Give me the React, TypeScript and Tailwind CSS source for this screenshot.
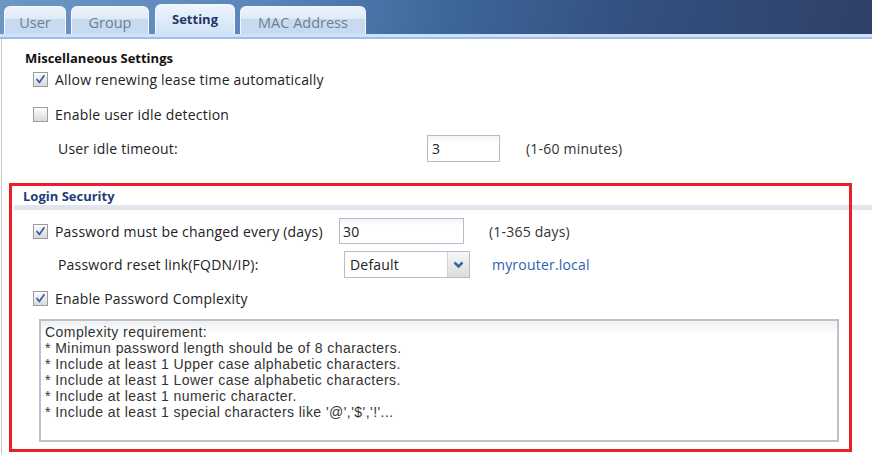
import React from "react";

const font = { fontFamily: '"Open Sans", "Liberation Sans", sans-serif' };
const areaFont = { fontFamily: '"Liberation Sans", Arial, sans-serif' };

function Check({ checked }: { checked: boolean }) {
  return (
    <div className="w-[15px] h-[15px] shrink-0 border border-[#9c9c9c] bg-gradient-to-b from-[#fdfdfd] to-[#d9d9d9] flex items-center justify-center">
      {checked && (
        <svg width="11" height="11" viewBox="0 0 11 11">
          <path d="M2 5.5 L4.3 8.5 L9 1.8" fill="none" stroke="#3d5fae" strokeWidth="1.8" strokeLinecap="round" strokeLinejoin="round" />
        </svg>
      )}
    </div>
  );
}

function Tab({ label, active, w }: { label: string; active?: boolean; w: string }) {
  return (
    <div
      className={`${w} ${active ? "h-[30px] bg-gradient-to-b from-[#eef5fd] to-[#cfe2f7] text-[#1f3766] font-bold pt-[5px] text-[13px]" : "h-[28px] bg-[linear-gradient(to_bottom,#edf3fb_0%,#dfeaf7_45%,#c7daf1_46%,#c7daf1_100%)] text-[#6f7f92] pt-[7px] text-[14.5px]"} rounded-t-[6px] border border-b-0 border-[#f4f8fe] flex items-start justify-center leading-[18px]`}
    >
      {label}
    </div>
  );
}

export default function App() {
  return (
    <div className="w-[872px] h-[454px] relative overflow-hidden bg-white text-[14px] tracking-[0.2px] text-[#222]" style={font}>
      <div className="h-[34px] bg-[linear-gradient(100deg,#6d95c5_0%,#5c86ba_30%,#3c6698_52%,#33507f_72%,#2f4068_100%)] flex items-end pl-[4px] tracking-normal">
        <Tab label="User" w="w-[62px]" />
        <div className="w-[5px]" />
        <Tab label="Group" w="w-[78px]" />
        <div className="w-[6px]" />
        <Tab label="Setting" active w="w-[80px]" />
        <div className="w-[5px]" />
        <Tab label="MAC Address" w="w-[126px]" />
      </div>
      <div className="h-[3px] bg-[#cfe2fb]" />
      <div className="h-[2px] bg-[#9fbfe6]" />
      <div className="ml-px border-l border-[#c6c6c6] h-[415px] flex flex-col">
        <div className="mt-[10px] h-[18px] leading-[18px] pl-[23px] font-bold text-[13px] tracking-normal text-[#111]">Miscellaneous Settings</div>
        <div className="h-[24px] flex items-center pl-[31px] gap-[7px]">
          <Check checked />
          <span>Allow renewing lease time automatically</span>
        </div>
        <div className="mt-[11px] h-[24px] flex items-center pl-[31px] gap-[7px]">
          <Check checked={false} />
          <span>Enable user idle detection</span>
        </div>
        <div className="mt-[9px] h-[27px] flex items-center pl-[56px]">
          <span className="w-[369px]">User idle timeout:</span>
          <div className="w-[73px] h-[27px] border border-[#b7bccb] bg-gradient-to-b from-[#f2f3f4] to-white to-[30%] flex items-center pl-[4px]">3</div>
          <span className="ml-[26px] text-[#333]">(1-60 minutes)</span>
        </div>
        <div className="mt-[25px] h-[18px] leading-[18px] pl-[21px] font-bold text-[13px] tracking-normal text-[#1e3e78]">Login Security</div>
        <div className="h-[5px] ml-[12px] bg-[#e1e5ee]" />
        <div className="mt-[8px] h-[26px] flex items-center pl-[31px]">
          <Check checked />
          <span className="ml-[7px] w-[284px]">Password must be changed every (days)</span>
          <div className="w-[125px] h-[26px] border border-[#b7bccb] bg-gradient-to-b from-[#f2f3f4] to-white to-[30%] flex items-center pl-[3px]">30</div>
          <span className="ml-[25px] text-[#333]">(1-365 days)</span>
        </div>
        <div className="mt-[7px] h-[27px] flex items-center pl-[56px]">
          <span className="w-[286px]">Password reset link(FQDN/IP):</span>
          <div className="w-[126px] h-[27px] border border-[#b7bccb] flex">
            <div className="flex-1 flex items-center pl-[5px] bg-white">Default</div>
            <div className="w-[22px] border-l border-[#cfd2d8] bg-gradient-to-b from-[#f7f7f7] to-[#dcdcdc] flex items-center justify-center">
              <svg width="11" height="8" viewBox="0 0 11 8">
                <path d="M1.5 1.5 L5.5 5.5 L9.5 1.5" fill="none" stroke="#3566ae" strokeWidth="2.5" />
              </svg>
            </div>
          </div>
          <span className="ml-[22px] text-[#2f5fb0]">myrouter.local</span>
        </div>
        <div className="mt-[10px] h-[20px] flex items-center pl-[31px] gap-[7px]">
          <Check checked />
          <span>Enable Password Complexity</span>
        </div>
        <div
          className="mt-[11px] ml-[37px] w-[800px] h-[123px] border-2 border-[#bcc0cd] bg-[linear-gradient(to_bottom,#eef0f1_0px,#ffffff_14px)] pl-[4px] pt-[3px] text-[14px] tracking-[0.45px] leading-[16px] text-[#333]"
          style={areaFont}
        >
          <div>Complexity requirement:</div>
          <div>* Minimun password length should be of 8 characters.</div>
          <div>* Include at least 1 Upper case alphabetic characters.</div>
          <div>* Include at least 1 Lower case alphabetic characters.</div>
          <div>* Include at least 1 numeric character.</div>
          <div>* Include at least 1 special characters like '@','$','!'...</div>
        </div>
      </div>
      <div className="absolute left-[9px] top-[183px] w-[843px] h-[269px] border-[3px] border-[#e8202a] pointer-events-none" />
    </div>
  );
}
